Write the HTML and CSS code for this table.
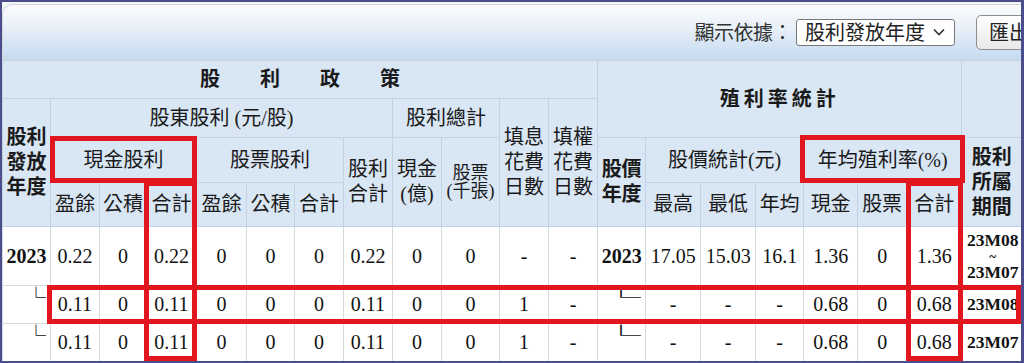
FILE: index.html
```html
<!DOCTYPE html>
<html lang="zh-Hant">
<head>
<meta charset="utf-8">
<title>股利政策</title>
<link rel="stylesheet" href="styles.css">
</head>
<body>
<div class="frame">
  <div class="toolbar">
    <span class="label">顯示依據：</span>
    <span class="select">股利發放年度<svg class="chev" width="12" height="8" viewBox="0 0 12 8"><polyline points="1,1.5 6,6.5 11,1.5" fill="none" stroke="#333" stroke-width="1.6"/></svg></span>
    <span class="btn">匯出</span>
  </div>
  <table class="dt">
    <colgroup>
      <col class="c48"><col class="c49"><col class="c47"><col class="c50"><col class="c50"><col class="c48"><col class="c49"><col class="c49"><col class="c49"><col class="c58">
      <col class="c49"><col class="c49"><col class="c48"><col class="c55"><col class="c55"><col class="c48"><col class="c54"><col class="c49"><col class="c55"><col class="c60">
    </colgroup>
    <thead>
      <tr class="h1">
        <th colspan="12" class="t1">股利政策</th>
        <th colspan="7" rowspan="2" class="t2">殖利率統計</th>
        <th rowspan="2"></th>
      </tr>
      <tr class="h2">
        <th rowspan="3" class="b">股利<br>發放<br>年度</th>
        <th colspan="7">股東股利 (元/股)</th>
        <th colspan="2">股利總計</th>
        <th rowspan="3">填息<br>花費<br>日數</th>
        <th rowspan="3">填權<br>花費<br>日數</th>
      </tr>
      <tr class="h3">
        <th colspan="3">現金股利</th>
        <th colspan="3">股票股利</th>
        <th rowspan="2">股利<br>合計</th>
        <th rowspan="2">現金<br>(億)</th>
        <th rowspan="2" class="stk">股票<br>(千張)</th>
        <th rowspan="2" class="b">股價<br>年度</th>
        <th colspan="3">股價統計(元)</th>
        <th colspan="3">年均殖利率(%)</th>
        <th rowspan="2" class="b">股利<br>所屬<br>期間</th>
      </tr>
      <tr class="h4">
        <th>盈餘</th><th>公積</th><th>合計</th>
        <th>盈餘</th><th>公積</th><th>合計</th>
        <th>最高</th><th>最低</th><th>年均</th>
        <th>現金</th><th>股票</th><th>合計</th>
      </tr>
    </thead>
    <tbody>
      <tr class="ra">
        <td class="b">2023</td><td>0.22</td><td>0</td><td>0.22</td><td>0</td><td>0</td><td>0</td><td>0.22</td><td>0</td><td>0</td><td>-</td><td>-</td>
        <td class="b">2023</td><td>17.05</td><td>15.03</td><td>16.1</td><td>1.36</td><td>0</td><td>1.36</td>
        <td class="per"><span class="pl">23M08</span><span class="pt">~</span><span class="pl">23M07</span></td>
      </tr>
      <tr class="rb">
        <td class="tree">└</td><td>0.11</td><td>0</td><td>0.11</td><td>0</td><td>0</td><td>0</td><td>0.11</td><td>0</td><td>0</td><td>1</td><td>-</td>
        <td class="tree"><span class="wide">└</span></td><td>-</td><td>-</td><td>-</td><td>0.68</td><td>0</td><td>0.68</td>
        <td class="per">23M08</td>
      </tr>
      <tr class="rb">
        <td class="tree">└</td><td>0.11</td><td>0</td><td>0.11</td><td>0</td><td>0</td><td>0</td><td>0.11</td><td>0</td><td>0</td><td>1</td><td>-</td>
        <td class="tree"><span class="wide">└</span></td><td>-</td><td>-</td><td>-</td><td>0.68</td><td>0</td><td>0.68</td>
        <td class="per">23M07</td>
      </tr>
    </tbody>
  </table>
  <div class="mark m-cash"></div>
  <div class="mark m-cashsum"></div>
  <div class="mark m-yield"></div>
  <div class="mark m-yieldsum"></div>
  <div class="mark m-row"></div>
</div>
</body>
</html>
```
FILE: styles.css
```css
* { box-sizing: border-box; }
body {
  margin: 0;
  background: #fff;
  font-family: "Liberation Serif", "Noto Sans CJK TC", serif;
  color: #111;
}
.frame {
  width: 1024px;
  height: 363px;
  border: 2px solid #4b4d8d;
  border-right-width: 3px;
  background: #f4f5f8;
  overflow: hidden;
  position: relative;
}
.toolbar {
  margin-top: 2px;
  height: 56px;
  display: flex;
  align-items: center;
  justify-content: flex-end;
  border: 1px solid #cfd6de;
  border-right: none;
  border-radius: 10px 0 0 0;
  background: linear-gradient(#fafbfd, #e7eff7 45%, #c4dbf1);
  font-family: "Noto Sans CJK TC", sans-serif;
  font-size: 20px;
  line-height: 1;
  color: #333;
}
.label { margin-right: 4px; letter-spacing: -0.5px; }
.select {
  display: flex;
  align-items: center;
  gap: 8px;
  height: 27px;
  padding: 0 9px 0 8px;
  border: 1px solid #777;
  border-radius: 3px;
  background: #fff;
  color: #222;
}
.chev { flex: none; }
.btn {
  flex: none;
  display: flex;
  align-items: center;
  width: 75px;
  height: 35px;
  margin-left: 21px;
  margin-right: -30px;
  padding-left: 12px;
  border: 1px solid #8d8d8d;
  border-radius: 5px;
  background: linear-gradient(#fefefe, #e9e9e9);
  color: #222;
}
.dt {
  width: 1019px;
  table-layout: fixed;
  border-collapse: collapse;
  font-size: 20px;
  line-height: 25px;
}
.c47 { width: 47px; } .c48 { width: 48px; } .c49 { width: 49px; } .c50 { width: 50px; }
.c54 { width: 54px; } .c55 { width: 55px; } .c58 { width: 58px; } .c60 { width: 60px; }
.dt th, .dt td {
  padding: 0;
  text-align: center;
  vertical-align: middle;
  white-space: nowrap;
}
.dt th {
  background: #d9e6f4;
  border: 1px solid #c3d2e3;
  font-weight: normal;
  color: #1a1a1a;
}
.dt td {
  background: #fff;
  border: 1px solid #d3dae2;
  color: #111;
}
.h1 { height: 38px; }
.h2 { height: 39px; }
.h3 { height: 45px; }
.h4 { height: 44px; }
.ra { height: 59px; }
.rb { height: 38px; }
.dt .b { font-weight: bold; }
.dt .t1 { font-weight: bold; letter-spacing: 40px; padding-left: 40px; }
.dt .t2 { font-weight: bold; letter-spacing: 4px; }
.dt .stk { font-size: 18px; line-height: 18px; }
.dt .per { font-weight: bold; font-size: 17.5px; padding-left: 2px; }
.pl { display: block; line-height: 18.5px; }
.pt { display: block; line-height: 13px; font-size: 13px; }
.dt .tree {
  text-align: right;
  vertical-align: top;
  padding: 1px 4px 0 0;
  font-family: "Noto Sans CJK TC", sans-serif;
  line-height: 20px;
}
.wide {
  display: inline-block;
  transform: scaleX(2);
  transform-origin: 100% 50%;
}
.mark {
  position: absolute;
  border: 5px solid #e1161f;
}
.m-cash { left: 48px; top: 134px; width: 147px; height: 47px; }
.m-cashsum { left: 142px; top: 179px; width: 53px; height: 180px; }
.m-yield { left: 798px; top: 133px; width: 165px; height: 48px; }
.m-yieldsum { left: 904px; top: 179px; width: 57px; height: 180px; }
.m-row { left: 45px; top: 283px; width: 974px; height: 39px; }
```
